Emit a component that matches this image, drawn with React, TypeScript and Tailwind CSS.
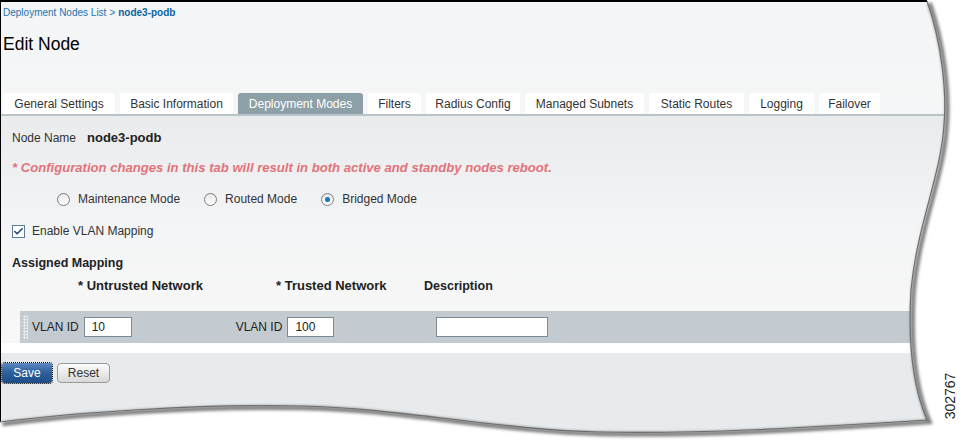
import { Check } from "lucide-react";

const tabs = [
  { label: "General Settings", w: "w-[112px]" },
  { label: "Basic Information", w: "w-[113px]" },
  { label: "Deployment Modes", w: "w-[125px]", active: true },
  { label: "Filters", w: "w-[53px]" },
  { label: "Radius Config", w: "w-[94px]" },
  { label: "Managed Subnets", w: "w-[119px]" },
  { label: "Static Routes", w: "w-[95px]" },
  { label: "Logging", w: "w-[65px]" },
  { label: "Failover", w: "w-[61px]" },
];

const modes = [
  { label: "Maintenance Mode", checked: false },
  { label: "Routed Mode", checked: false },
  { label: "Bridged Mode", checked: true },
];

// torn edge of the captured screenshot (right side + bottom)
const EDGE =
  "M927,1 C941,40 947,90 944,125 C941,175 917,225 911,290 C908,340 912,385 927,420 C800,428 700,434 600,432 C500,430 400,408 300,406 C200,404 80,412 0,422";

function Radio({ checked }: { checked: boolean }) {
  return (
    <span className="flex h-[13px] w-[13px] items-center justify-center rounded-full border border-[#7c7c7c] bg-gradient-to-b from-[#e9e9e9] to-white">
      {checked && <span className="h-[5px] w-[5px] rounded-full bg-[#1577c0]" />}
    </span>
  );
}

function TextBox({ value, className }: { value?: string; className: string }) {
  return (
    <div
      className={`flex h-[20px] items-center border border-[#7d8a92] bg-white pl-[7px] text-[12px] text-[#222] ${className}`}
    >
      {value}
    </div>
  );
}

export default function App() {
  return (
    <div className="relative h-[443px] w-[971px] overflow-hidden bg-white font-['Liberation_Sans',Arial,sans-serif]">
      <div className="flex h-[443px] w-[955px] flex-col border-l border-t-2 border-black bg-gradient-to-b from-[#f4f5f6] to-[#f9fafa]">
        {/* Breadcrumb */}
        <div className="flex h-[20px] items-center gap-[3px] pl-[2px] text-[10px] text-[#1f73ad]">
          <span>Deployment Nodes List</span>
          <span>&gt;</span>
          <span className="font-bold text-[#0c64a0]">node3-podb</span>
        </div>

        <h1 className="mt-[10px] flex h-[24px] items-center pl-[2px] text-[17.5px] text-black">Edit Node</h1>

        {/* Tabs */}
        <div className="mt-[37px] flex items-end gap-[5px] border-b-2 border-[#b9c4ca] pl-[2px]">
          {tabs.map((t) => (
            <div
              key={t.label}
              className={`flex h-[21px] items-center justify-center rounded-t-[3px] text-[12px] ${t.w} ${
                t.active ? "bg-[#8d9fa7] text-white" : "bg-white text-[#333]"
              }`}
            >
              {t.label}
            </div>
          ))}
        </div>

        {/* Panel */}
        <div className="flex flex-col bg-gradient-to-b from-[#e9ebed] via-[#f4f5f6] to-[#f8f8f8]">
          <div className="mt-[12px] flex h-[20px] items-center pl-[11px] text-[12px] text-[#333]">
            <span>Node Name</span>
            <span className="ml-[11px] text-[13px] font-bold text-[#222]">node3-podb</span>
          </div>

          <div className="mt-[10px] flex h-[20px] items-center pl-[11px] text-[13.1px] font-semibold italic text-[#e2737a]">
            * Configuration changes in this tab will result in both active and standby nodes reboot.
          </div>

          <div className="mt-[11px] flex h-[20px] items-center gap-[24px] pl-[56px] text-[12px] text-[#333]">
            {modes.map((m) => (
              <label key={m.label} className="flex items-center gap-[8px]">
                <Radio checked={m.checked} />
                {m.label}
              </label>
            ))}
          </div>

          <div className="mt-[12px] flex h-[20px] items-center gap-[7px] pl-[11px] text-[12px] text-[#333]">
            <span className="flex h-[13px] w-[13px] items-center justify-center border border-[#5d7c98] bg-white">
              <Check className="h-[11px] w-[11px] text-[#23467a]" strokeWidth={3.5} />
            </span>
            Enable VLAN Mapping
          </div>

          <div className="mt-[12px] flex h-[20px] items-center pl-[11px] text-[12.5px] font-bold text-[#222]">
            Assigned Mapping
          </div>

          <div className="mt-[3px] flex h-[20px] items-center pl-[77px] text-[13px] font-bold text-[#222]">
            <span className="w-[198px]">* Untrusted Network</span>
            <span className="w-[148px]">* Trusted Network</span>
            <span className="text-[12.5px]">Description</span>
          </div>

          {/* Mapping row */}
          <div className="ml-[19px] mt-[15px] flex h-[32px] items-center bg-[#c3cbd1] text-[12px] text-[#222]">
            <span className="ml-[3px] h-[24px] w-[5px] bg-[radial-gradient(circle,#e6e9eb_1px,transparent_1.2px)] bg-[length:3px_3px]" />
            <span className="ml-[4px]">VLAN ID</span>
            <TextBox value="10" className="ml-[5px] w-[48px]" />
            <span className="ml-[104px]">VLAN ID</span>
            <TextBox value="100" className="ml-[5px] w-[47px]" />
            <TextBox className="ml-[102px] w-[112px]" />
          </div>
          <div className="h-[10px] bg-white" />
        </div>

        {/* Footer buttons */}
        <div className="flex flex-1 items-start gap-[5px] bg-[#e8ebed] pl-[1px] pt-[10px]">
          <button className="h-[20px] w-[50px] rounded-[3px] bg-gradient-to-b from-[#5a88bf] via-[#2d5f9b] to-[#1e4c86] text-[12px] text-white outline outline-1 outline-dotted outline-black">
            Save
          </button>
          <button className="h-[20px] w-[53px] rounded-[4px] border border-[#9a9a9a] bg-gradient-to-b from-[#fbfbfb] to-[#d9d9d9] text-[12px] text-[#333]">
            Reset
          </button>
        </div>
      </div>

      {/* torn-paper edge over the captured screen */}
      <svg className="pointer-events-none absolute inset-0" width="971" height="443" viewBox="0 0 971 443">
        <defs>
          <filter id="blur" x="-10%" y="-10%" width="120%" height="120%">
            <feGaussianBlur stdDeviation="1.6" />
          </filter>
        </defs>
        <path
          d={`M0,0 H971 V443 H0 Z M0,0 L927,0 ${EDGE.replace("M927,1", "L927,1")} Z`}
          fill="#ffffff"
          fillRule="evenodd"
        />
        <path d={EDGE} transform="translate(2.5,2)" fill="none" stroke="#7e7e7e" strokeWidth="4.5" filter="url(#blur)" />
        <path d={EDGE} fill="none" stroke="#6e6e6e" strokeWidth="1.2" />
      </svg>

      <span className="absolute left-[950px] top-[396px] -translate-x-1/2 -translate-y-1/2 -rotate-90 text-[14px] leading-none text-[#222]">
        302767
      </span>
    </div>
  );
}
